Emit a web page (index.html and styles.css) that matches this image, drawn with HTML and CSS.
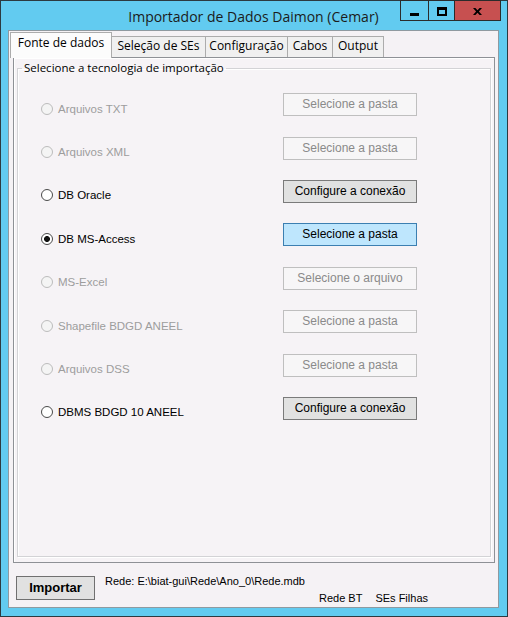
FILE: index.html
```html
<!DOCTYPE html>
<html lang="pt">
<head>
<meta charset="utf-8">
<title>Importador de Dados Daimon (Cemar)</title>
<link rel="stylesheet" href="styles.css">
</head>
<body>
<div class="window">
  <div class="titlebar">Importador de Dados Daimon (Cemar)</div>
  <div class="controls">
    <div class="ctl min"><svg width="9" height="3" viewBox="0 0 9 3"><rect width="9" height="3" fill="#000"/></svg></div>
    <div class="ctl max"><svg width="10" height="9" viewBox="0 0 10 9"><path d="M0 0H10V9H0Z M2 3V7H8V3Z" fill="#000" fill-rule="evenodd"/></svg></div>
    <div class="ctl close"><svg width="9" height="7" viewBox="0 0 9 7"><path d="M0 0H2.4L4.5 2.3L6.6 0H9L5.9 3.5L9 7H6.6L4.5 4.7L2.4 7H0L3.1 3.5Z" fill="#000"/></svg></div>
  </div>
  <div class="client">
    <div class="tabs">
      <div class="tab active w1">Fonte de dados</div>
      <div class="tab w2">Seleção de SEs</div>
      <div class="tab w3">Configuração</div>
      <div class="tab w4">Cabos</div>
      <div class="tab w5">Output</div>
    </div>
    <div class="page">
      <fieldset class="group">
        <legend>Selecione a tecnologia de importação</legend>
        <div class="row">
          <div class="opt dis"><span class="radio"></span>Arquivos TXT</div>
          <div class="btn dis">Selecione a pasta</div>
        </div>
        <div class="row">
          <div class="opt dis"><span class="radio"></span>Arquivos XML</div>
          <div class="btn dis">Selecione a pasta</div>
        </div>
        <div class="row">
          <div class="opt"><span class="radio"></span>DB Oracle</div>
          <div class="btn">Configure a conexão</div>
        </div>
        <div class="row">
          <div class="opt"><span class="radio checked"></span>DB MS-Access</div>
          <div class="btn hot">Selecione a pasta</div>
        </div>
        <div class="row">
          <div class="opt dis"><span class="radio"></span>MS-Excel</div>
          <div class="btn dis">Selecione o arquivo</div>
        </div>
        <div class="row">
          <div class="opt dis"><span class="radio"></span>Shapefile BDGD ANEEL</div>
          <div class="btn dis">Selecione a pasta</div>
        </div>
        <div class="row">
          <div class="opt dis"><span class="radio"></span>Arquivos DSS</div>
          <div class="btn dis">Selecione a pasta</div>
        </div>
        <div class="row">
          <div class="opt"><span class="radio"></span>DBMS BDGD 10 ANEEL</div>
          <div class="btn">Configure a conexão</div>
        </div>
      </fieldset>
    </div>
    <div class="footer">
      <div class="import">Importar</div>
      <div class="info">
        <div class="path">Rede: E:\biat-gui\Rede\Ano_0\Rede.mdb</div>
        <div class="flags"><span>Rede BT</span><span>SEs Filhas</span></div>
      </div>
    </div>
  </div>
</div>
</body>
</html>
```

FILE: styles.css
```css
* { box-sizing: border-box; }
html, body { margin: 0; padding: 0; }
body {
  width: 508px;
  height: 617px;
  overflow: hidden;
  background: #fff;
  font-family: "Liberation Sans", Arial, sans-serif;
}
.window {
  position: relative;
  width: 508px;
  height: 617px;
  border: 1px solid #2c3a40;
  background: #62cbf0;
  padding: 0 8px 8px 7px;
  display: flex;
  flex-direction: column;
}
.titlebar {
  height: 29px;
  padding-top: 3px;
  line-height: 26px;
  text-align: center;
  font-family: "Open Sans", "Noto Sans", sans-serif;
  font-size: 14px;
  color: #1b1b1b;
  white-space: nowrap;
}
.controls {
  position: absolute;
  top: -1px;
  left: 399px;
  display: flex;
}
.ctl {
  height: 21px;
  border: 1px solid #2b2b2b;
  display: flex;
  align-items: center;
  justify-content: center;
}
.ctl + .ctl { margin-left: -1px; }
.min { width: 29px; padding-top: 7px; }
.max { width: 27px; padding-top: 1px; }
.close { width: 47px; background: #c75050; padding-top: 2px; }

.client {
  height: 578px;
  border: 1px solid #8f9aa0;
  background: #f5f2f5;
  display: flex;
  flex-direction: column;
}
.tabs {
  height: 26px;
  flex: none;
  display: flex;
  align-items: flex-end;
  padding-left: 1px;
}
.tab {
  height: 21px;
  border: 1px solid #acacac;
  border-bottom: none;
  background: #f0f0f0;
  margin-left: -1px;
  font-family: "Open Sans", "Noto Sans", sans-serif;
  font-size: 12px;
  line-height: 18px;
  text-align: center;
  color: #000;
  white-space: nowrap;
}
.tab.active {
  height: 26px;
  margin-left: 0;
  margin-bottom: -1px;
  background: #fcfcfc;
  line-height: 20px;
  position: relative;
  z-index: 1;
}
.w1 { width: 102px; }
.w2 { width: 95px; }
.w3 { width: 83px; }
.w4 { width: 46px; }
.w5 { width: 52px; }

.page {
  flex: none;
  margin: 0 3px 0 4px;
  height: 506px;
  border: 1px solid #8e9196;
  background: #f6f3f6;
  padding: 3px 3px 5px 3px;
  box-shadow: inset 1px 1px 0 #fff;
}
.group {
  margin: 0;
  padding: 8px 0 0 0;
  height: 100%;
  min-width: 0;
  border: 1px solid #d3d3d6;
  box-shadow: 1px 1px 0 #fff, inset 1px 1px 0 #fff;
}
.group legend {
  margin-left: 4px;
  padding: 0 2px;
  font-family: "Open Sans", "Noto Sans", sans-serif;
  font-size: 11.5px;
  line-height: 14px;
  color: #000;
}
.row {
  height: 43.4px;
  display: grid;
  grid-template-columns: 265px 134px;
  align-items: center;
}
.opt {
  display: flex;
  align-items: center;
  gap: 5px;
  padding-top: 8px;
  padding-left: 23px;
  font-size: 11.5px;
  color: #000;
  white-space: nowrap;
}
.opt.dis { color: #9d9d9d; }
.radio {
  width: 12px;
  height: 12px;
  border-radius: 50%;
  border: 1px solid #4a4a4a;
  background: #fff;
  flex: none;
}
.opt.dis .radio {
  border-color: #bcbcbc;
  background: #f4f4f4;
}
.radio.checked {
  background: radial-gradient(circle, #111 0 2.6px, #fff 3.3px);
}
.btn {
  width: 134px;
  height: 23px;
  border: 1px solid #7a7a7a;
  background: #e1e1e1;
  font-size: 12px;
  line-height: 21px;
  text-align: center;
  color: #000;
  white-space: nowrap;
}
.btn.dis {
  border-color: #bfbfbf;
  background: #f7f6f7;
  color: #8a8a8a;
}
.btn.hot {
  border-color: #3c7fb1;
  background: #bee6fd;
}

.footer {
  flex: none;
  height: 44px;
  display: flex;
  align-items: flex-start;
  padding: 13px 0 0 7px;
}
.import {
  width: 79px;
  height: 24px;
  border: 1px solid #707070;
  background: #e1e1e1;
  font-size: 13px;
  font-weight: bold;
  line-height: 22px;
  text-align: center;
  color: #000;
}
.info {
  margin-left: 10px;
  margin-top: -2px;
  font-size: 11px;
  line-height: 14px;
  color: #000;
}
.flags {
  margin-top: 3px;
  padding-left: 214px;
  display: flex;
  gap: 13px;
}
```
